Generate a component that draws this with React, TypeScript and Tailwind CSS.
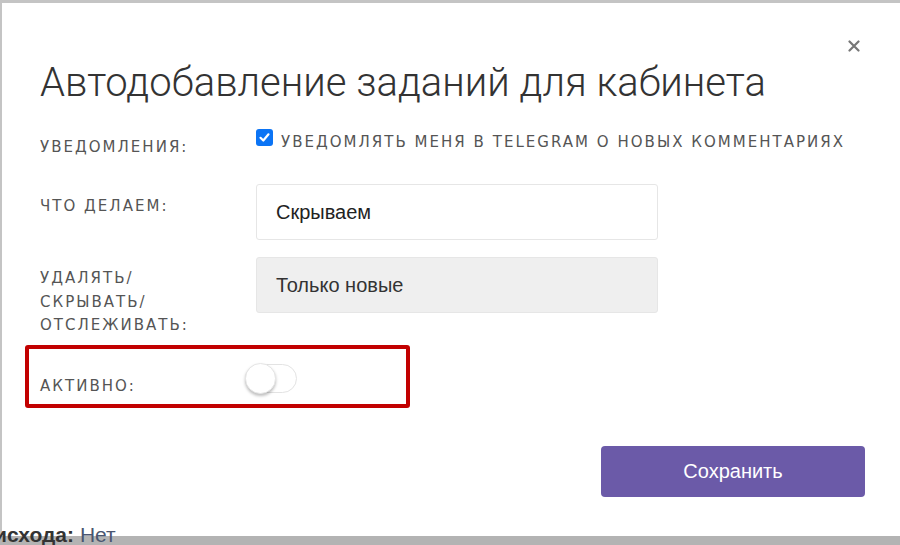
import { useState } from "react"

const labelCls =
  "font-['DejaVu_Sans',sans-serif] text-[15px] leading-[20px] tracking-[0.135em] uppercase text-[#555]"

export default function App() {
  const [notify, setNotify] = useState(true)
  const [active, setActive] = useState(false)

  return (
    <div className="relative w-[900px] h-[545px] overflow-hidden bg-[#b3b3b3]">
      <div className="relative h-[536px] w-[900px] bg-white border-l-2 border-t-[3px] border-[#c4c4c4] pl-[38px] pr-[35px] pt-[56px]">
        <button className="absolute right-[40px] top-[37px] text-[#777]">
          <svg width="12" height="12" viewBox="0 0 12 12">
            <path d="M1.5 1.5 L10.5 10.5 M10.5 1.5 L1.5 10.5" stroke="currentColor" strokeWidth="2.2" strokeLinecap="round" />
          </svg>
        </button>

        <h2 className="font-['Roboto',sans-serif] font-light text-[40px] leading-[48px] text-[#333]">
          Автодобавление заданий для кабинета
        </h2>

        {/* уведомления */}
        <div className="mt-[20px] grid grid-cols-[216px_1fr]">
          <div className={`${labelCls} mt-[10px]`}>Уведомления:</div>
          <label className="flex items-start gap-[8px] cursor-pointer" onClick={() => setNotify(!notify)}>
            <span
              className={`mt-[2px] w-[17px] h-[17px] shrink-0 rounded-[3px] flex items-center justify-center ${
                notify ? "bg-[#0b74f5]" : "border border-gray-400 bg-white"
              }`}
            >
              {notify && (
                <svg width="13" height="13" viewBox="0 0 13 13">
                  <path d="M2.5 6.8 L5.3 9.5 L10.5 3.3" stroke="white" strokeWidth="2.2" fill="none" strokeLinecap="round" strokeLinejoin="round" />
                </svg>
              )}
            </span>
            <span className={`${labelCls} mt-[5px] whitespace-nowrap`}>Уведомлять меня в telegram о новых комментариях</span>
          </label>
        </div>

        {/* что делаем */}
        <div className="mt-[27px] grid grid-cols-[216px_1fr]">
          <div className={`${labelCls} mt-[12px]`}>Что делаем:</div>
          <div className="w-[402px] h-[56px] border border-[#e6e6e6] rounded-[3px] bg-white flex items-center pl-[19px] font-['Liberation_Sans',sans-serif] text-[20px] text-[#222]">
            Скрываем
          </div>
        </div>

        {/* удалять */}
        <div className="mt-[17px] grid grid-cols-[216px_1fr]">
          <div className={`${labelCls} leading-[23.5px] mt-[10px]`}>
            Удалять/
            <br />
            скрывать/
            <br />
            отслеживать:
          </div>
          <div className="w-[402px] h-[56px] border border-[#e6e6e6] rounded-[3px] bg-[#efefef] flex items-center pl-[19px] font-['Liberation_Sans',sans-serif] text-[20px] text-[#333]">
            Только новые
          </div>
        </div>

        {/* активно */}
        <div className="mt-[7px] ml-[-15px] w-[385px] h-[63px] border-4 border-[#c20000] rounded-[3px] flex items-start pl-[11px]">
          <div className={`${labelCls} w-[205px] mt-[27px]`}>Активно:</div>
          <button
            onClick={() => setActive(!active)}
            className={`relative mt-[15px] w-[52px] h-[29px] rounded-full border ${
              active ? "bg-[#6b5aa8] border-[#6b5aa8]" : "bg-white border-[#e3e3e3]"
            }`}
          >
            <span
              className={`absolute top-[-2px] w-[31px] h-[31px] rounded-full bg-white border border-[#e6e6e6] shadow-[0_2px_3px_rgba(0,0,0,0.25)] ${
                active ? "left-[20px]" : "left-[-1px]"
              }`}
            />
          </button>
        </div>

        <div className="mt-[38px] flex justify-end">
          <button className="w-[264px] h-[51px] rounded-[4px] bg-[#6b5aa8] text-white font-['Liberation_Sans',sans-serif] text-[20px]">
            Сохранить
          </button>
        </div>
      </div>

      <div className="absolute left-[-6px] top-[523px] font-['Liberation_Sans',sans-serif] text-[21px] leading-[24px] whitespace-nowrap">
        <span className="font-bold text-[#333]">исхода:</span> <span className="text-[#4a5570]">Нет</span>
      </div>
    </div>
  )
}
